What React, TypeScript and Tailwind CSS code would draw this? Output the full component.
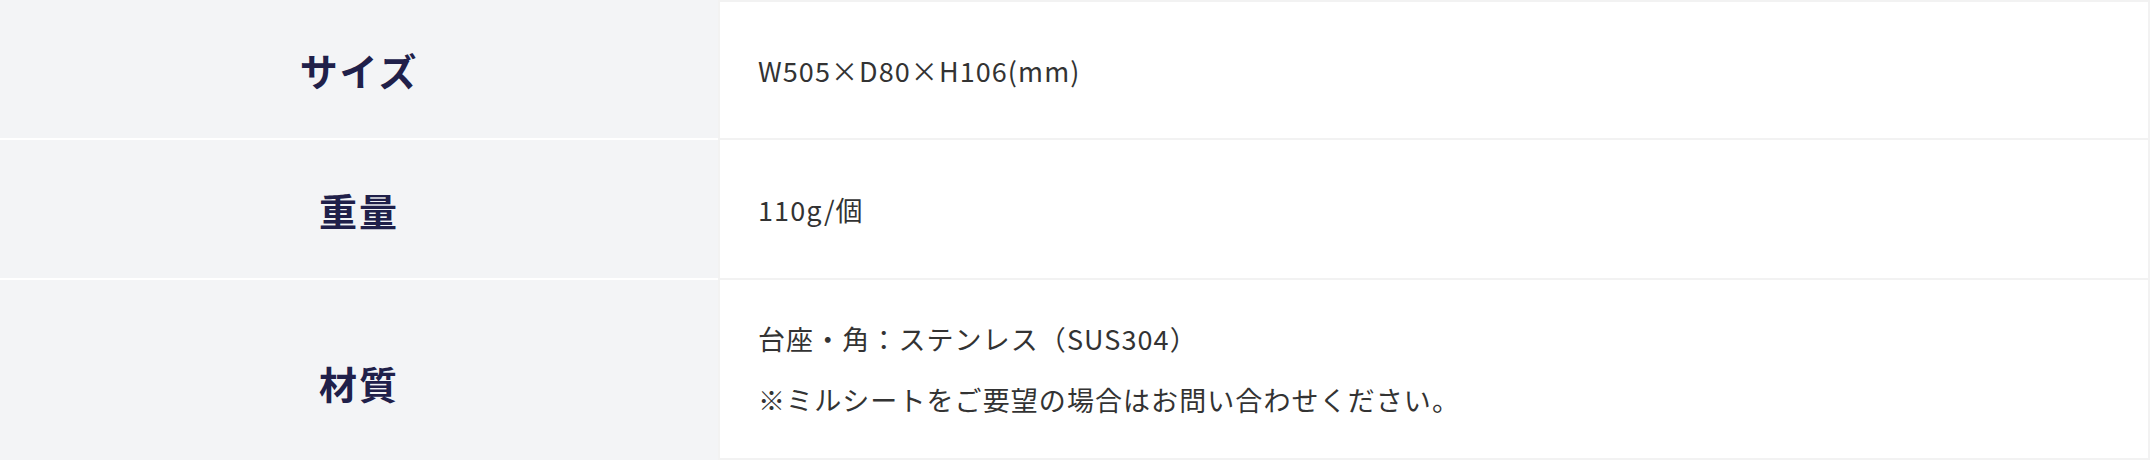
const specs = [
  { label: "サイズ", lines: ["W505×D80×H106(mm)"], height: "h-[140px]", shift: "" },
  { label: "重量", lines: ["110g/個"], height: "h-[140px]", shift: "" },
  {
    label: "材質",
    lines: ["台座・角：ステンレス（SUS304）", "※ミルシートをご要望の場合はお問い合わせください。"],
    height: "h-[180px]",
    shift: "pt-[24px]",
  },
];

const App = () => {
  return (
    <div className="w-[2150px] h-[460px] bg-white font-['Noto_Sans_CJK_JP',sans-serif]">
      <div className="grid grid-cols-[718px_1fr]">
        {specs.map((row, i) => {
          const last = i === specs.length - 1;
          return (
            <div key={i} className="contents">
              {/* label cell */}
              <div
                className={`flex items-center justify-center bg-[#f3f4f6] ${row.height} ${row.shift} ${
                  last ? "" : "border-b-2 border-white"
                }`}
              >
                <span className="text-[38px] font-bold tracking-[0.05em] text-[#20204a]">
                  {row.label}
                </span>
              </div>

              {/* value cell */}
              <div
                className={`flex flex-col justify-center pl-[38px] border-x-2 border-b-2 border-[#f2f2f2] ${row.height} ${
                  i === 0 ? "border-t-2" : ""
                }`}
              >
                {row.lines.map((line, j) => (
                  <p
                    key={j}
                    className="text-[27px] leading-[61px] tracking-[0.04em] text-[#333333]"
                  >
                    {line}
                  </p>
                ))}
              </div>
            </div>
          );
        })}
      </div>
    </div>
  );
};

export default App;
